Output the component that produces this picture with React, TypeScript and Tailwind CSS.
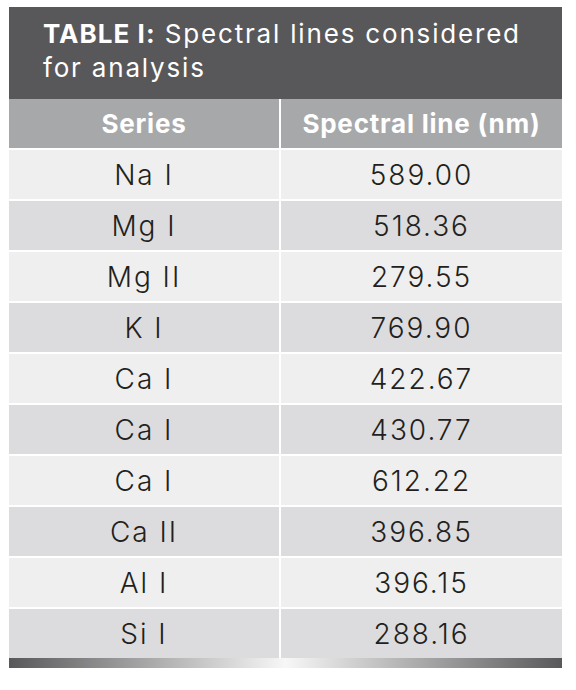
const rows: [string, string][] = [
  ['Na I', '589.00'],
  ['Mg I', '518.36'],
  ['Mg II', '279.55'],
  ['K I', '769.90'],
  ['Ca I', '422.67'],
  ['Ca I', '430.77'],
  ['Ca I', '612.22'],
  ['Ca II', '396.85'],
  ['Al I', '396.15'],
  ['Si I', '288.16'],
]

export default function App() {
  return (
    <main className="min-h-[690px] w-[576px] bg-white pl-[9px] pt-[7px] font-['Inter',sans-serif]">
      <div className="w-[553px]">
        <div className="h-[92px] bg-[#58585a] pl-[34px] pr-[20px] pt-[10px] text-[26px] leading-[34px] tracking-[0.07em] text-white">
          <span className="font-bold tracking-[0.04em]">TABLE I:</span> Spectral lines considered for analysis
        </div>
        <div className="grid grid-cols-[270px_1fr] gap-x-[2px] bg-white">
          <div className="flex h-[49px] items-center justify-center bg-[#a7a8aa] text-[26px] font-bold tracking-[0.03em] text-white">
            Series
          </div>
          <div className="flex h-[49px] items-center justify-center bg-[#a7a8aa] text-[26px] font-bold tracking-[0.03em] text-white">
            Spectral line (nm)
          </div>
          {rows.map(([series, line], i) => {
            const bg = i % 2 === 0 ? 'bg-[#efefef]' : 'bg-[#dcdcde]'
            return [
              <div key={`s${i}`} className={`mt-[2px] flex h-[49px] items-center justify-center ${bg} text-[28px] font-light tracking-[0.07em] text-[#231f20]`}>
                {series}
              </div>,
              <div key={`l${i}`} className={`mt-[2px] flex h-[49px] items-center justify-center ${bg} text-[28px] font-light tracking-[0.07em] text-[#231f20]`}>
                {line}
              </div>,
            ]
          })}
        </div>
        <div className="h-[10px] bg-[linear-gradient(to_right,#58585a,#f7f7f7_50%,#58585a)]" />
      </div>
    </main>
  )
}
